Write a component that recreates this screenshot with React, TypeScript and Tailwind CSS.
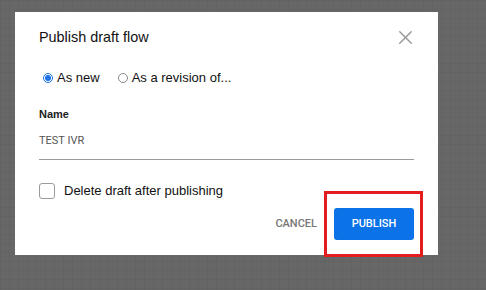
import { X } from "lucide-react";

export default function App() {
  return (
    <div className="relative h-[290px] w-[486px] overflow-hidden bg-[#676767] bg-[linear-gradient(#636363_1px,transparent_1px),linear-gradient(90deg,#636363_1px,transparent_1px)] bg-[size:9px_9px] pl-[15px] pt-[12px] font-['Liberation_Sans',Arial,sans-serif]">
      <div className="flex h-[243px] w-[423px] flex-col bg-white px-[24px] pt-[17px]">
        <div className="flex h-[17px] items-center justify-between">
          <h2 className="text-[14.4px] leading-[17px] text-[#111]">Publish draft flow</h2>
          <X className="-my-[3px] mr-[-3px] h-[23px] w-[23px] text-[#9a9a9a]" strokeWidth={1.5} />
        </div>

        <div className="mt-[24px] flex items-center text-[13px] leading-[16px] text-[#111]">
          <label className="flex items-center">
            <span className="ml-[4px] mr-[4px] flex h-[10px] w-[10px] items-center justify-center rounded-full border border-[#1a73e8]">
              <span className="h-[6px] w-[6px] rounded-full bg-[#1a73e8]" />
            </span>
            As new
          </label>
          <label className="ml-[18px] flex items-center">
            <span className="mr-[4px] h-[10px] w-[10px] rounded-full border border-[#8a8a8a]" />
            As a revision of...
          </label>
        </div>

        <div className="mt-[22px] text-[11px] font-bold leading-[13px] text-[#222]">Name</div>
        <div className="mt-[13px] border-b border-[#9a9a9a] pb-[11px] font-['Roboto',sans-serif] text-[11px] leading-[14px] text-[#555]">
          TEST IVR
        </div>

        <label className="mt-[23px] flex items-center text-[13px] leading-[16px] text-[#111]">
          <span className="mr-[9px] h-[16px] w-[16px] rounded-[3px] border border-[#9a9a9a]" />
          Delete draft after publishing
        </label>

        <div className="mt-[9px] flex items-center justify-end gap-[17px] font-['Roboto',sans-serif] text-[11px] font-medium">
          <button className="text-[#777]">CANCEL</button>
          <button className="h-[32px] w-[80px] rounded-[3px] bg-[#0b72e8] text-white">PUBLISH</button>
        </div>
      </div>

      <div className="absolute left-[324px] top-[191px] h-[66px] w-[99px] border-[3px] border-[#e21d1d]" />
    </div>
  );
}
